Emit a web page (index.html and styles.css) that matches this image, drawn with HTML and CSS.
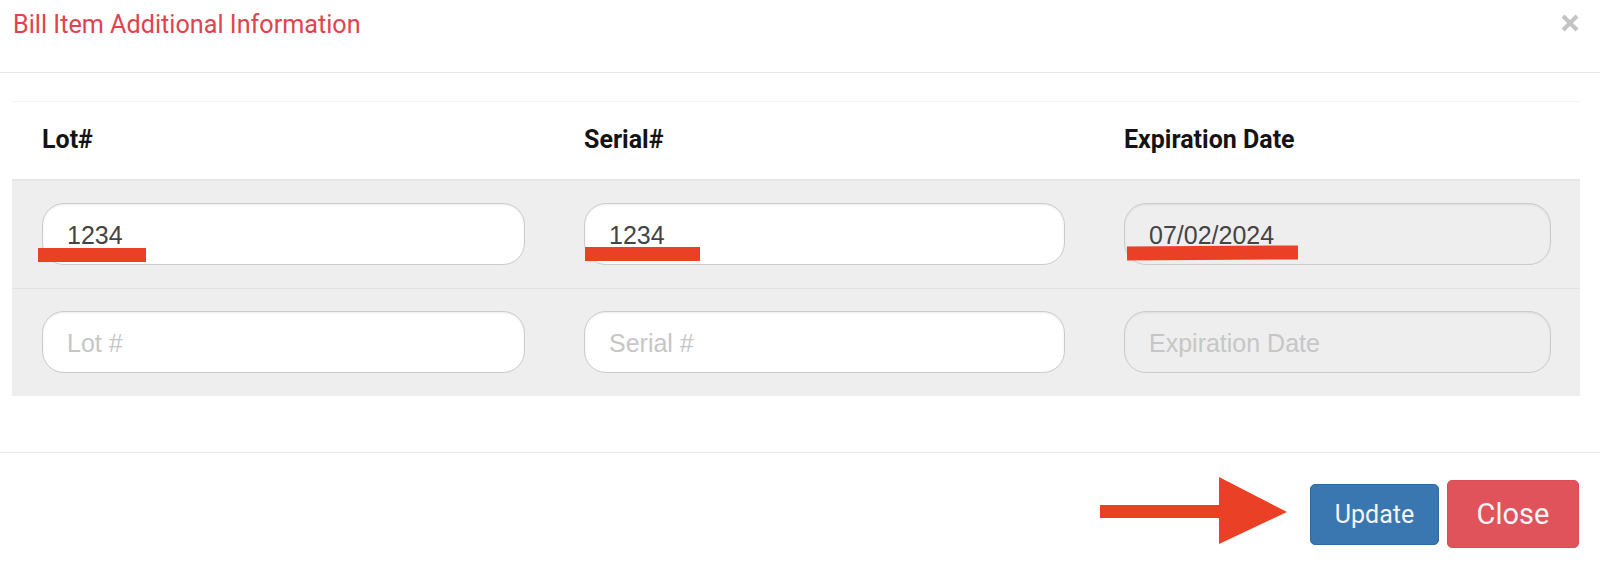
FILE: index.html
```html
<!DOCTYPE html>
<html lang="en">
<head>
<meta charset="utf-8">
<title>Bill Item Additional Information</title>
<link rel="stylesheet" href="styles.css">
</head>
<body>
<div class="modal">
  <div class="modal-header">
    <h4 class="modal-title">Bill Item Additional Information</h4>
    <button class="close-x" type="button" aria-label="Close">
      <svg width="20" height="20" viewBox="0 0 20 20"><path d="M3 3 L17 17 M17 3 L3 17" stroke="#c4c4c4" stroke-width="4.2" stroke-linecap="butt"/></svg>
    </button>
  </div>
  <div class="modal-body">
    <div class="table">
      <div class="row head">
        <div class="cell">Lot#</div>
        <div class="cell">Serial#</div>
        <div class="cell">Expiration Date</div>
      </div>
      <div class="row data">
        <div class="cell"><input class="field" type="text" value="1234" placeholder="Lot #"></div>
        <div class="cell"><input class="field" type="text" value="1234" placeholder="Serial #"></div>
        <div class="cell"><input class="field readonly" type="text" value="07/02/2024" placeholder="Expiration Date" readonly></div>
      </div>
      <div class="row data sep">
        <div class="cell"><input class="field" type="text" placeholder="Lot #"></div>
        <div class="cell"><input class="field" type="text" placeholder="Serial #"></div>
        <div class="cell"><input class="field readonly" type="text" placeholder="Expiration Date" readonly></div>
      </div>
    </div>
  </div>
  <div class="modal-footer">
    <button class="btn btn-update" type="button">Update</button>
    <button class="btn btn-close" type="button">Close</button>
  </div>

  <div class="mark mark-lot"></div>
  <div class="mark mark-serial"></div>
  <div class="mark mark-exp"></div>
  <svg class="arrow" width="188" height="68" viewBox="0 0 188 68">
    <rect x="0" y="28" width="122" height="13" fill="#ea4025"/>
    <polygon points="119,0 187,35 119,67" fill="#ea4025"/>
  </svg>
</div>
</body>
</html>
```

FILE: styles.css
```css
html, body {
  margin: 0;
  padding: 0;
  background: #ffffff;
}

.modal {
  position: relative;
  width: 1600px;
  height: 565px;
  font-family: Roboto, "Liberation Sans", Arial, sans-serif;
  color: #222;
}

.modal-header {
  display: flex;
  justify-content: space-between;
  align-items: flex-start;
  padding: 10px 20px 0 13px;
  height: 62px;
  border-bottom: 1px solid #e8e8e8;
}

.modal-title {
  margin: 0;
  font-size: 25.2px;
  line-height: 30px;
  font-weight: 400;
  color: #e1434e;
}

.close-x {
  margin: 3px 0 0 0;
  padding: 0;
  border: 0;
  background: transparent;
  width: 20px;
  height: 20px;
  display: block;
}

.close-x svg {
  display: block;
}

.modal-body {
  padding: 28px 20px 0 12px;
  height: 351px;
  border-bottom: 1px solid #e8e8e8;
}

.table {
  border-top: 1px solid #f4f4f4;
}

.row {
  display: grid;
  grid-template-columns: 542px 540px 1fr;
}

.cell {
  padding: 0 29px 0 30px;
}

.head {
  padding: 23px 0 24px 0;
  font-size: 25px;
  line-height: 30px;
  font-weight: 700;
  color: #141414;
  border-bottom: 2px solid #e6e6e6;
}

.data {
  background: #eeeeee;
  padding: 22px 0 23px 0;
}

.sep {
  border-top: 1px solid #e2e2e2;
  padding: 22px 0 23px 0;
}

.field {
  display: block;
  box-sizing: border-box;
  width: 100%;
  height: 62px;
  margin: 0;
  padding: 2px 24px 0 24px;
  border: 1px solid #cbcbcb;
  border-radius: 22px;
  background: #ffffff;
  box-shadow: inset 0 1px 2px rgba(0, 0, 0, 0.08);
  font-family: "Liberation Sans", Arial, Helvetica, sans-serif;
  font-size: 25px;
  color: #444444;
  outline: none;
}

.field::placeholder {
  color: #c6c6c6;
}

.field.readonly {
  background: #eeeeee;
}

.modal-footer {
  display: flex;
  justify-content: flex-end;
  align-items: center;
  gap: 8px;
  padding: 27px 21px 0 0;
}

.btn {
  border-radius: 5px;
  font-family: Roboto, "Liberation Sans", Arial, sans-serif;
  color: #f4f4f4;
  padding: 0;
  cursor: pointer;
}

.btn-update {
  width: 129px;
  height: 61px;
  font-size: 25px;
  background: #3a77b1;
  border: 1px solid #2f6aa2;
}

.btn-close {
  width: 132px;
  height: 68px;
  font-size: 29px;
  background: #e0535b;
  border: 1px solid #dc4c55;
}

.mark {
  position: absolute;
  height: 14px;
  background: #ea4025;
}

.mark-lot {
  left: 38px;
  top: 248px;
  width: 108px;
}

.mark-serial {
  left: 585px;
  top: 247px;
  width: 115px;
}

.mark-exp {
  left: 1127px;
  top: 246px;
  width: 171px;
  transform: rotate(-0.4deg);
}

.arrow {
  position: absolute;
  left: 1100px;
  top: 477px;
  display: block;
}
```
